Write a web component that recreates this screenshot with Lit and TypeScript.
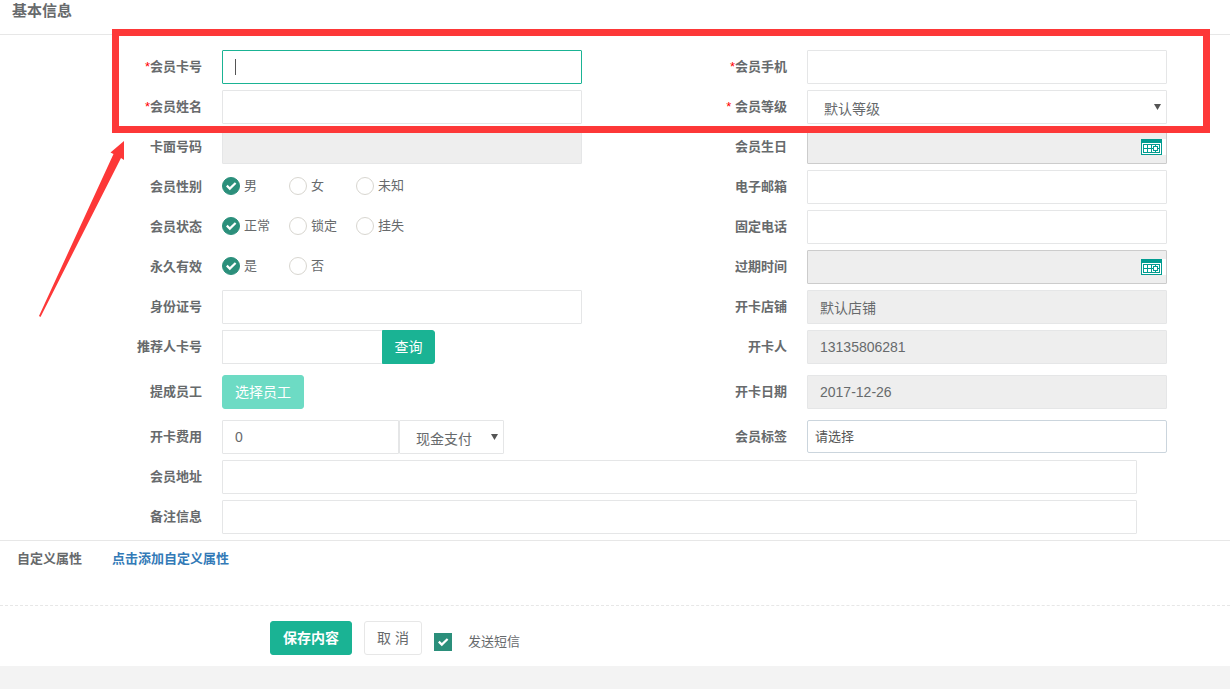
import { LitElement, html, css, svg } from "lit";
import { customElement, state } from "lit/decorators.js";

type Choice = { name: string; label: string; options: string[] };

const GENDER: Choice = { name: "gender", label: "会员性别", options: ["男", "女", "未知"] };
const STATUS: Choice = { name: "status", label: "会员状态", options: ["正常", "锁定", "挂失"] };
const FOREVER: Choice = { name: "forever", label: "永久有效", options: ["是", "否"] };

const calendarIcon = svg`
  <svg width="25" height="16" viewBox="0 0 25 16" shape-rendering="crispEdges" aria-hidden="true">
    <rect width="25" height="16" fill="#fff" />
    <rect width="21" height="16" fill="#019c90" />
    <rect x="1" y="4" width="19" height="11" fill="#fff" />
    <rect x="2" y="5" width="17" height="9" fill="#019c90" />
    <path d="M3 6h3v3H3zM7 6h3v3H7zM11 6h3v3h-3zM15 6h3v3h-3zM3 10h3v3H3zM7 10h3v3H7zM11 10h3v3h-3zM15 10h3v3h-3z" fill="#fff" />
    <rect x="12" y="7" width="5" height="5" fill="#019c90" />
    <rect x="13" y="8" width="3" height="3" fill="#fff" />
  </svg>`;

@customElement("app-root")
export class AppRoot extends LitElement {
  @state() private picked: Record<string, string> = { gender: "男", status: "正常", forever: "是" };

  static styles = css`
    :host {
      display: block;
      position: relative;
      min-height: 100vh;
      background: #f3f3f3;
      color: #676a6c;
      font: 13px/18px "Liberation Sans", "Noto Sans CJK SC", sans-serif;
    }
    *, *::before, *::after { box-sizing: border-box; }
    input, select, button { font: inherit; color: inherit; margin: 0; }
    .panel { background: #fff; }
    .title {
      margin: 0;
      height: 35px;
      padding-left: 12px;
      border-bottom: 1px solid #e7e7e7;
      font-size: 15px;
      line-height: 22px;
      font-weight: 700;
    }
    .form {
      display: grid;
      grid-template-columns: repeat(2, minmax(0, 1fr));
      row-gap: 6px;
      padding: 15px 45px 6px 15px;
      border-bottom: 1px solid #e7e7e7;
    }
    .row {
      display: grid;
      grid-template-columns: 187px minmax(0, 1fr);
      column-gap: 20px;
      padding-right: 18px;
      align-items: start;
    }
    .spaced { padding-top: 5px; padding-bottom: 5px; }
    .wide { grid-column: 1 / -1; padding-right: 48px; }
    .label { padding-top: 8px; text-align: right; font-weight: 700; }
    .star { color: #f00; font-weight: 400; }
    .field {
      display: block;
      width: 100%;
      height: 34px;
      padding: 0 12px;
      border: 1px solid #e5e6e7;
      border-radius: 1px;
      background: #fff;
      font-size: 14px;
      outline: none;
    }
    .active {
      border-color: #1ab394;
      caret-color: transparent;
      background: linear-gradient(#555, #555) 12px 8px / 1px 16px no-repeat #fff;
    }
    .off { background: #eee; }
    .date { border-color: #ccc; }
    .tags { height: 33px; padding: 0 7px; border-color: #cbd5dd; border-radius: 2px; font-size: 13px; }
    .tags::placeholder { color: #555; opacity: 1; }
    .select {
      appearance: none;
      padding: 3px 16px 0;
      background: url("data:image/svg+xml,%3Csvg xmlns='http://www.w3.org/2000/svg' width='7' height='6'%3E%3Cpath d='M0 0h7L3.5 6z' fill='%23555'/%3E%3C/svg%3E") right 5px top 13px no-repeat #fff;
    }
    .datebox { position: relative; }
    .pick {
      position: absolute;
      top: 9px;
      right: 1px;
      display: flex;
      padding: 0;
      border: 0;
      background: none;
    }
    .group { display: flex; }
    .referrer { width: 160px; border-right: 0; }
    .fee { width: 177px; border-radius: 1px 0 0 1px; }
    .pay { width: 105px; }
    .btn {
      height: 34px;
      padding: 0 12px;
      border: 1px solid #1ab394;
      border-radius: 3px;
      background: #1ab394;
      color: #fff;
      font-size: 14px;
      line-height: 20px;
      white-space: nowrap;
    }
    .query { width: 53px; padding: 0 11px; border-radius: 0 3px 3px 0; }
    .soft { border-color: #6ddbc4; background: #6ddbc4; justify-self: start; }
    .save { font-weight: 700; }
    .cancel { border-color: #e7e7e7; background: #fff; color: #676a6c; }
    .choices {
      display: flex;
      margin: 0;
      padding: 7px 0 0;
      border: 0;
    }
    .choice { display: flex; align-items: center; gap: 4px; width: 67px; white-space: nowrap; }
    .radio, .check {
      appearance: none;
      flex: none;
      width: 18px;
      height: 18px;
      border: 1px solid #d8d6d0;
      border-radius: 50%;
      background: #fff;
    }
    .check { border-radius: 0; }
    .radio:checked, .check:checked {
      border-color: #2b8f7b;
      background: url("data:image/svg+xml,%3Csvg xmlns='http://www.w3.org/2000/svg' width='16' height='16'%3E%3Cpath d='M3.8 7.6l3 3L12.6 5' fill='none' stroke='%23fff' stroke-width='2.2'/%3E%3C/svg%3E") center no-repeat #2b8f7b;
    }
    .custom {
      display: flex;
      gap: 30px;
      height: 65px;
      padding: 9px 17px 0;
      border-bottom: 1px dashed #e7e7e7;
      font-weight: 700;
    }
    .add { color: #337ab7; text-decoration: none; }
    .actions {
      display: flex;
      gap: 12px;
      padding: 15px 15px 11px 270px;
    }
    .sms { display: flex; align-items: center; gap: 16px; padding-top: 8px; }
    .frame {
      position: absolute;
      top: 29px;
      left: 112px;
      right: 20px;
      height: 104px;
      border: 7px solid #fd3838;
      pointer-events: none;
    }
    .arrow { position: absolute; top: 140px; left: 38px; pointer-events: none; }
  `;

  private label(id: string, text: string, star = "") {
    return html`<label class="label" for=${id}><span class="star">${star}</span>${text}</label>`;
  }

  private text(id: string, text: string, star = "", extra = "", value = "") {
    return html`<div class="row">
      ${this.label(id, text, star)}
      <input class="field ${extra}" id=${id} type="text" .value=${value} ?readonly=${extra === "off"} />
    </div>`;
  }

  private date(id: string, text: string) {
    return html`<div class="row">
      ${this.label(id, text)}
      <div class="datebox">
        <input class="field off date" id=${id} type="text" readonly />
        <button class="pick" type="button" aria-label=${text}>${calendarIcon}</button>
      </div>
    </div>`;
  }

  private choice(c: Choice) {
    return html`<div class="row" role="radiogroup" aria-labelledby=${c.name}>
      <span class="label" id=${c.name}>${c.label}</span>
      <div class="choices">
        ${c.options.map(
          (o) => html`<label class="choice">
            <input class="radio" type="radio" name=${c.name} .checked=${this.picked[c.name] === o}
              @change=${() => (this.picked = { ...this.picked, [c.name]: o })} />${o}</label>`
        )}
      </div>
    </div>`;
  }

  render() {
    return html`
      <main class="panel">
        <h1 class="title">基本信息</h1>
        <div class="form">
          ${this.text("card", "会员卡号", "*", "active")}
          ${this.text("mobile", "会员手机", "*")}
          ${this.text("name", "会员姓名", "*")}
          <div class="row">
            ${this.label("level", "会员等级", "* ")}
            <select class="field select" id="level"><option>默认等级</option></select>
          </div>
          ${this.text("face", "卡面号码", "", "off")}
          ${this.date("birthday", "会员生日")}
          ${this.choice(GENDER)}
          ${this.text("email", "电子邮箱")}
          ${this.choice(STATUS)}
          ${this.text("phone", "固定电话")}
          ${this.choice(FOREVER)}
          ${this.date("expire", "过期时间")}
          ${this.text("idcard", "身份证号")}
          ${this.text("shop", "开卡店铺", "", "off", "默认店铺")}
          <div class="row">
            ${this.label("referrer", "推荐人卡号")}
            <div class="group">
              <input class="field referrer" id="referrer" type="text" />
              <button class="btn query" type="button">查询</button>
            </div>
          </div>
          ${this.text("opener", "开卡人", "", "off", "13135806281")}
          <div class="row spaced">
            ${this.label("staff", "提成员工")}
            <button class="btn soft" id="staff" type="button">选择员工</button>
          </div>
          <div class="row spaced">
            ${this.label("opened", "开卡日期")}
            <input class="field off" id="opened" type="text" .value=${"2017-12-26"} readonly />
          </div>
          <div class="row">
            ${this.label("fee", "开卡费用")}
            <div class="group">
              <input class="field fee" id="fee" type="text" .value=${"0"} />
              <select class="field select pay" aria-label="开卡费用"><option>现金支付</option></select>
            </div>
          </div>
          <div class="row">
            ${this.label("tags", "会员标签")}
            <input class="field tags" id="tags" type="text" placeholder="请选择" />
          </div>
          <div class="row wide">
            ${this.label("address", "会员地址")}
            <input class="field" id="address" type="text" />
          </div>
          <div class="row wide">
            ${this.label("remark", "备注信息")}
            <input class="field" id="remark" type="text" />
          </div>
        </div>
        <div class="custom">
          <span>自定义属性</span>
          <a class="add" href="#">点击添加自定义属性</a>
        </div>
        <div class="actions">
          <button class="btn save" type="button">保存内容</button>
          <button class="btn cancel" type="button">取 消</button>
          <label class="sms"><input class="check" type="checkbox" checked />发送短信</label>
        </div>
      </main>
      <div class="frame"></div>
      <svg class="arrow" width="88" height="178" viewBox="38 140 88 178" aria-hidden="true">
        <path d="M124 141 110.5 152.5 113.5 154 39 316 40.5 317 121 158 124 160z" fill="#fd3838" />
      </svg>
    `;
  }
}
